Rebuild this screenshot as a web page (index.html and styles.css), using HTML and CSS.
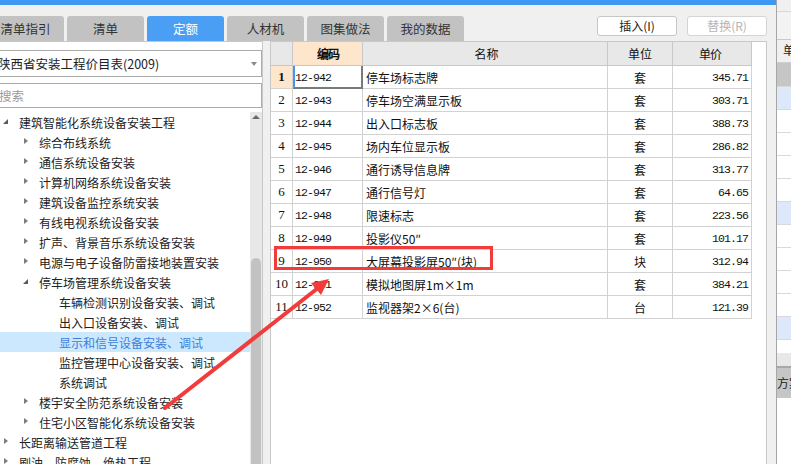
FILE: index.html
```html
<!DOCTYPE html>
<html lang="zh-CN">
<head>
<meta charset="utf-8">
<title>定额</title>
<link rel="stylesheet" href="styles.css">
</head>
<body>
<div class="app">
  <div class="main">
    <div class="topbar"></div>
    <div class="toolbar">
      <div class="tabs">
        <div class="tab first">清单指引</div>
        <div class="tab">清单</div>
        <div class="tab active">定额</div>
        <div class="tab">人材机</div>
        <div class="tab">图集做法</div>
        <div class="tab">我的数据</div>
      </div>
      <div class="actions">
        <button class="btn">插入(I)</button>
        <button class="btn disabled">替换(R)</button>
      </div>
    </div>
    <div class="content">
      <div class="leftpane">
        <div class="select"><span class="select-text">陕西省安装工程价目表(2009)</span><i class="caret"></i></div>
        <div class="search">搜索</div>
        <div class="treewrap">
          <ul class="tree">
            <li class="l0"><i class="tw open"></i>建筑智能化系统设备安装工程</li>
            <li class="l1"><i class="tw closed"></i>综合布线系统</li>
            <li class="l1"><i class="tw closed"></i>通信系统设备安装</li>
            <li class="l1"><i class="tw closed"></i>计算机网络系统设备安装</li>
            <li class="l1"><i class="tw closed"></i>建筑设备监控系统安装</li>
            <li class="l1"><i class="tw closed"></i>有线电视系统设备安装</li>
            <li class="l1"><i class="tw closed"></i>扩声、背景音乐系统设备安装</li>
            <li class="l1"><i class="tw closed"></i>电源与电子设备防雷接地装置安装</li>
            <li class="l1"><i class="tw open"></i>停车场管理系统设备安装</li>
            <li class="l2">车辆检测识别设备安装、调试</li>
            <li class="l2">出入口设备安装、调试</li>
            <li class="l2 selected">显示和信号设备安装、调试</li>
            <li class="l2">监控管理中心设备安装、调试</li>
            <li class="l2">系统调试</li>
            <li class="l1"><i class="tw closed"></i>楼宇安全防范系统设备安装</li>
            <li class="l1"><i class="tw closed"></i>住宅小区智能化系统设备安装</li>
            <li class="l0"><i class="tw closed"></i>长距离输送管道工程</li>
            <li class="l0"><i class="tw closed"></i>刷油、防腐蚀、绝热工程</li>
          </ul>
          <div class="vscroll"><i class="up"></i><div class="thumb"></div></div>
        </div>
      </div>
      <div class="splitter"></div>
      <div class="tablepane">
        <div class="grid">
          <div class="row head">
            <div class="c num"></div>
            <div class="c code sel">编码</div>
            <div class="c name">名称</div>
            <div class="c unit">单位</div>
            <div class="c price">单价</div>
          </div>
          <div class="row">
            <div class="c num cur">1</div>
            <div class="c code focus">12-942</div>
            <div class="c name">停车场标志牌</div>
            <div class="c unit">套</div>
            <div class="c price">345.71</div>
          </div>
          <div class="row">
            <div class="c num">2</div>
            <div class="c code">12-943</div>
            <div class="c name">停车场空满显示板</div>
            <div class="c unit">套</div>
            <div class="c price">303.71</div>
          </div>
          <div class="row">
            <div class="c num">3</div>
            <div class="c code">12-944</div>
            <div class="c name">出入口标志板</div>
            <div class="c unit">套</div>
            <div class="c price">388.73</div>
          </div>
          <div class="row">
            <div class="c num">4</div>
            <div class="c code">12-945</div>
            <div class="c name">场内车位显示板</div>
            <div class="c unit">套</div>
            <div class="c price">286.82</div>
          </div>
          <div class="row">
            <div class="c num">5</div>
            <div class="c code">12-946</div>
            <div class="c name">通行诱导信息牌</div>
            <div class="c unit">套</div>
            <div class="c price">313.77</div>
          </div>
          <div class="row">
            <div class="c num">6</div>
            <div class="c code">12-947</div>
            <div class="c name">通行信号灯</div>
            <div class="c unit">套</div>
            <div class="c price">64.65</div>
          </div>
          <div class="row">
            <div class="c num">7</div>
            <div class="c code">12-948</div>
            <div class="c name">限速标志</div>
            <div class="c unit">套</div>
            <div class="c price">223.56</div>
          </div>
          <div class="row">
            <div class="c num">8</div>
            <div class="c code">12-949</div>
            <div class="c name">投影仪50″</div>
            <div class="c unit">套</div>
            <div class="c price">101.17</div>
          </div>
          <div class="row">
            <div class="c num">9</div>
            <div class="c code">12-950</div>
            <div class="c name">大屏幕投影屏50″(块)</div>
            <div class="c unit">块</div>
            <div class="c price">312.94</div>
          </div>
          <div class="row">
            <div class="c num">10</div>
            <div class="c code">12-951</div>
            <div class="c name">模拟地图屏1m×1m</div>
            <div class="c unit">套</div>
            <div class="c price">384.21</div>
          </div>
          <div class="row">
            <div class="c num">11</div>
            <div class="c code">12-952</div>
            <div class="c name">监视器架2×6(台)</div>
            <div class="c unit">台</div>
            <div class="c price">121.39</div>
          </div>
        </div>
      </div>
      <div class="gutter"></div>
    </div>
  </div>
  <div class="side">
    <div class="s-top"></div>
    <div class="s-bar"></div>
    <div class="s-head">单</div>
    <div class="s-row gray"></div>
    <div class="s-row blue"></div>
    <div class="s-row"></div>
    <div class="s-row"></div>
    <div class="s-row"></div>
    <div class="s-row"></div>
    <div class="s-row blue"></div>
    <div class="s-row"></div>
    <div class="s-row"></div>
    <div class="s-row"></div>
    <div class="s-row"></div>
    <div class="s-row blue"></div>
    <div class="s-short"></div>
    <div class="s-foot"></div>
    <div class="s-plan">方案</div>
    <div class="s-rest"></div>
  </div>
</div>
<svg class="annot" width="791" height="464" viewBox="0 0 791 464">
  <rect x="275.5" y="247.5" width="216" height="21" fill="none" stroke="#f23c3c" stroke-width="3"/>
  <line x1="165" y1="408" x2="318" y2="288" stroke="#f23c3c" stroke-width="4" stroke-linecap="round"/>
  <polygon points="329,279 321,295 311,283" fill="#f23c3c"/>
</svg>
</body>
</html>
```

FILE: styles.css
```css
* { box-sizing: border-box; }
html, body { margin: 0; padding: 0; }
body {
  width: 791px;
  height: 464px;
  overflow: hidden;
  background: #f0f0f0;
  font-family: "Noto Sans CJK SC", "Microsoft YaHei", sans-serif;
  font-size: 12px;
  color: #222;
  position: relative;
}
.app { display: flex; width: 791px; height: 464px; }
.main { width: 776px; display: flex; flex-direction: column; }
.topbar { height: 5px; background: #3f97f4; }
.toolbar { height: 36px; display: flex; align-items: flex-start; padding-top: 11px; }
.tabs { display: flex; gap: 3px; margin-left: -13px; }
.tab {
  width: 77px; height: 25px;
  background: #c2c2c2;
  border-radius: 3px 3px 0 0;
  display: flex; align-items: center; justify-content: center;
  font-size: 12.5px; color: #333;
}
.tab.first { width: 77px; }
.tab.active { background: #4a9ff5; color: #fff; }
.actions { margin-left: auto; display: flex; gap: 10px; padding-right: 9px; }
.btn {
  width: 80px; height: 20px;
  background: #fff;
  border: 1px solid #c6c6c6;
  border-radius: 3px;
  font-family: inherit; font-size: 12px; color: #222;
  padding: 0; line-height: 18px;
}
.btn.disabled { color: #b4b4b4; border-color: #d4d4d4; }

.content { flex: 1; display: flex; min-height: 0; }
.leftpane {
  width: 263px;
  background: #fff;
  border-top: 1px solid #c8c8c8;
  border-right: 1px solid #c8c8c8;
  padding-top: 8px;
  display: flex; flex-direction: column;
  overflow: hidden;
}
.select {
  height: 27px;
  margin-left: -6px;
  border: 1px solid #ababab;
  display: flex; align-items: center;
  padding-left: 3px;
  font-size: 12.5px; color: #222;
}
.select-text { flex: 1; }
.caret {
  width: 0; height: 0;
  border-left: 3.5px solid transparent;
  border-right: 3.5px solid transparent;
  border-top: 4px solid #8a8a8a;
  margin-right: 4px;
}
.search {
  height: 25px;
  margin-top: 6px;
  margin-left: -6px;
  border: 1px solid #ababab;
  display: flex; align-items: center;
  padding-left: 4px;
  color: #9a9a9a; font-size: 12.5px;
}
.treewrap { margin-top: 4px; flex: 1; display: flex; min-height: 0; }
.tree { list-style: none; margin: 0; padding: 0; width: 250px; }
.tree li {
  height: 20px;
  display: flex; align-items: center;
  white-space: nowrap;
  color: #222;
}
.tree li.l0 { padding-left: 3px; }
.tree li.l1 { padding-left: 23px; }
.tree li.l2 { padding-left: 59px; }
.tree li.selected { background: #cce8ff; color: #3b80d8; }
.tw { display: block; width: 16px; height: 20px; position: relative; flex: none; }
.tw.open::before {
  content: ""; position: absolute; left: 0; top: 7px;
  width: 0; height: 0;
  border-left: 5px solid transparent;
  border-bottom: 5px solid #5a5a5a;
}
.tw.closed::before {
  content: ""; position: absolute; left: 1px; top: 6px;
  width: 0; height: 0;
  border-left: 4px solid #7c7c7c;
  border-top: 3.5px solid transparent;
  border-bottom: 3.5px solid transparent;
}
.vscroll {
  width: 12px;
  background: #e8e8e8;
  display: flex; flex-direction: column; align-items: center;
}
.vscroll .up {
  display: block; margin-top: 3px;
  width: 0; height: 0;
  border-left: 4px solid transparent;
  border-right: 4px solid transparent;
  border-bottom: 4px solid #6a6a6a;
}
.vscroll .thumb {
  margin-top: 139px;
  width: 10px; flex: 1;
  background: #c2c2c2;
  border-radius: 5px 5px 0 0;
}
.splitter { width: 7px; }
.tablepane {
  width: 497px;
  background: #fff;
  border-top: 1px solid #c8c8c8;
  border-left: 1px solid #c8c8c8;
  border-right: 1px solid #c8c8c8;
}
.gutter { width: 9px; }
.row {
  display: grid;
  grid-template-columns: 22px 70px 245px 65px 79px;
  height: 23px;
}
.row.head { height: 24px; }
.c {
  border-right: 1px solid #d2d2d2;
  border-bottom: 1px solid #d2d2d2;
  display: flex; align-items: center;
  white-space: nowrap; overflow: hidden;
  color: #111;
}
.head .c { background: #e8e8e8; justify-content: center; border-color: #c8c8c8; font-size: 12px; }
.head .c.sel { background: #fde6cb; font-weight: bold; }
.num { justify-content: center; font-family: "Liberation Serif", serif; font-size: 13px; padding-left: 0; }
.num.cur { background: #fde6cb; font-weight: bold; }
.code {
  padding-left: 2px;
  font-family: "Liberation Mono", monospace; font-size: 11.5px; letter-spacing: -0.9px;
}
.code.focus { box-shadow: inset 2px 0 0 #4a95ea, inset -1px -1px 0 #7a7a7a; border-right-color: #7a7a7a; border-bottom-color: #7a7a7a; }
.name { padding-left: 3px; font-size: 12px; }
.unit { justify-content: center; font-size: 12px; }
.price {
  justify-content: flex-end; padding-right: 3px;
  font-family: "Liberation Mono", monospace; font-size: 11.5px; letter-spacing: -0.9px;
}

.side {
  width: 15px;
  border-left: 1px solid #a6a6a6;
  display: flex; flex-direction: column;
  overflow: hidden;
}
.s-top { height: 12px; background: #f0f0f0; border-bottom: 1px solid #d8d8d8; }
.s-bar { height: 28px; background: #f3f3f3; border-bottom: 1px solid #c8c8c8; }
.s-head { height: 23px; background: #f0f0f0; padding-left: 6px; line-height: 20px; font-size: 12px; white-space: nowrap; border-bottom: 1px solid #d0d0d0; }
.s-row { height: 23px; background: #fff; border-bottom: 1px solid #d8d8d8; }
.s-row.gray { background: #c6c6c6; height: 24px; }
.s-row.blue { background: #dde9fb; }
.s-short { height: 13px; background: #fff; }
.s-foot { height: 15px; background: #e8e8e8; border-bottom: 2px solid #a8a8a8; }
.s-plan { height: 30px; background: #c6c6c6; padding-top: 6px; font-size: 12px; white-space: nowrap; }
.s-rest { flex: 1; background: #fff; }

.annot { position: absolute; left: 0; top: 0; pointer-events: none; }
```
